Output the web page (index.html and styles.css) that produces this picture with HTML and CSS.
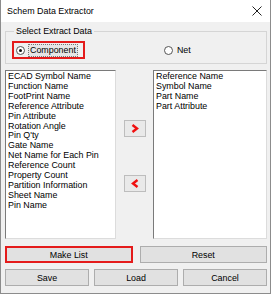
FILE: index.html
```html
<!DOCTYPE html>
<html lang="en">
<head>
    <meta charset="UTF-8">
    <meta name="viewport" content="width=device-width, initial-scale=1.0">
    <title>Schem Data Extractor</title>
    <link rel="stylesheet" href="styles.css">
</head>
<body>

    <div class="window">
        <div class="titlebar">
            <span class="title">Schem Data Extractor</span>
            <span class="close">
                <svg width="10" height="10" viewBox="0 0 10 10">
                    <path d="M0.5 0.5 L9.5 9.5 M9.5 0.5 L0.5 9.5" stroke="#222" stroke-width="1" fill="none"/>
                </svg>
            </span>
        </div>

        <div class="client">
            <!-- Выбор типа данных -->
            <fieldset class="group">
                <legend>Select Extract Data</legend>
                <div class="radio-row">
                    <label class="radio marked">
                        <span class="dot checked"></span>
                        <span class="focus">Component</span>
                    </label>
                    <label class="radio net">
                        <span class="dot"></span>
                        <span class="caption">Net</span>
                    </label>
                </div>
            </fieldset>

            <!-- Списки полей -->
            <div class="lists">
                <ul class="listbox">
                    <li>ECAD Symbol Name</li>
                    <li>Function Name</li>
                    <li>FootPrint Name</li>
                    <li>Reference Attribute</li>
                    <li>Pin Attribute</li>
                    <li>Rotation Angle</li>
                    <li>Pin Q'ty</li>
                    <li>Gate Name</li>
                    <li>Net Name for Each Pin</li>
                    <li>Reference Count</li>
                    <li>Property Count</li>
                    <li>Partition Information</li>
                    <li>Sheet Name</li>
                    <li>Pin Name</li>
                </ul>

                <div class="movers">
                    <button class="mover">
                        <svg width="8" height="9" viewBox="0 0 8 9">
                            <path d="M1.5 1 L6 4.5 L1.5 8" stroke="#f01010" stroke-width="2.4" fill="none"/>
                        </svg>
                    </button>
                    <button class="mover">
                        <svg width="8" height="9" viewBox="0 0 8 9">
                            <path d="M6.5 1 L2 4.5 L6.5 8" stroke="#f01010" stroke-width="2.4" fill="none"/>
                        </svg>
                    </button>
                </div>

                <ul class="listbox">
                    <li>Reference Name</li>
                    <li>Symbol Name</li>
                    <li>Part Name</li>
                    <li>Part Attribute</li>
                </ul>
            </div>

            <div class="btn-row two">
                <button class="btn marked-btn">Make List</button>
                <button class="btn">Reset</button>
            </div>
            <div class="btn-row three">
                <button class="btn">Save</button>
                <button class="btn">Load</button>
                <button class="btn">Cancel</button>
            </div>
        </div>
    </div>

</body>
</html>
```

FILE: styles.css
```css
body {
    margin: 0;
    padding: 0;
    background-color: #fff;
    font-family: "Liberation Sans", Arial, sans-serif;
    font-size: 8.9px;
    color: #000;
}
.window {
    width: 271px;
    height: 294px;
    box-sizing: border-box;
    border: 1px solid #8c8c8c;
    border-top: none;
    background-color: #f0f0f0;
    display: flex;
    flex-direction: column;
}
.titlebar {
    height: 22px;
    background-color: #fff;
    display: flex;
    align-items: center;
    justify-content: space-between;
    padding: 0 6px 0 6px;
}
.title {
    font-size: 8.9px;
}
.close {
    display: flex;
    margin-right: 2px;
}
.client {
    padding: 3px 3px 0 4px;
    display: flex;
    flex-direction: column;
}
.group {
    margin: 0;
    padding: 3px 6px 4px 6px;
    border: 1px solid #d5d5d5;
}
.group legend {
    padding: 0 2px;
    margin-left: 2px;
    line-height: 13px;
}
.radio-row {
    display: flex;
    align-items: center;
}
.radio {
    display: flex;
    align-items: center;
    height: 14px;
}
.radio.marked {
    border: 2px solid #e41b1b;
    padding: 0 5px 0 2px;
}
.radio.net {
    margin-left: 79px;
}
.dot {
    width: 7px;
    height: 7px;
    border: 1px solid #555;
    border-radius: 50%;
    background-color: #fff;
    position: relative;
    margin-right: 3px;
}
.dot.checked::after {
    content: "";
    position: absolute;
    left: 2px;
    top: 2px;
    width: 3px;
    height: 3px;
    border-radius: 50%;
    background-color: #111;
}
.focus {
    border: 1px dotted #777;
    background-color: #e6e6e6;
    line-height: 11px;
    padding: 0 1px;
}
.caption {
    margin-left: 1px;
}
.lists {
    display: grid;
    grid-template-columns: 111px 37px 1fr;
    margin-top: 6px;
    height: 169px;
}
.listbox {
    list-style: none;
    margin: 0;
    padding: 1px 2px;
    background-color: #fff;
    border: 1px solid;
    border-color: #7a7a7a #dcdcdc #dcdcdc #7a7a7a;
    line-height: 9.9px;
}
.movers {
    display: flex;
    flex-direction: column;
    align-items: center;
    padding-top: 50px;
    gap: 38px;
}
.mover {
    width: 22px;
    height: 17px;
    padding: 0;
    background-color: #e9e9e9;
    border: 1px solid #bdbdbd;
    display: flex;
    align-items: center;
    justify-content: center;
}
.btn-row {
    display: grid;
    margin-top: 7px;
}
.btn-row.two {
    grid-template-columns: 1fr 1fr;
    gap: 7px;
}
.btn-row.three {
    grid-template-columns: 1fr 1fr 1fr;
    gap: 5px;
    margin-top: 6px;
}
.btn {
    height: 17px;
    padding: 0;
    font-family: "Liberation Sans", Arial, sans-serif;
    font-size: 8.9px;
    color: #000;
    background-color: #e1e1e1;
    border: 1px solid #adadad;
}
.btn.marked-btn {
    border: 2px solid #e41b1b;
}
```
